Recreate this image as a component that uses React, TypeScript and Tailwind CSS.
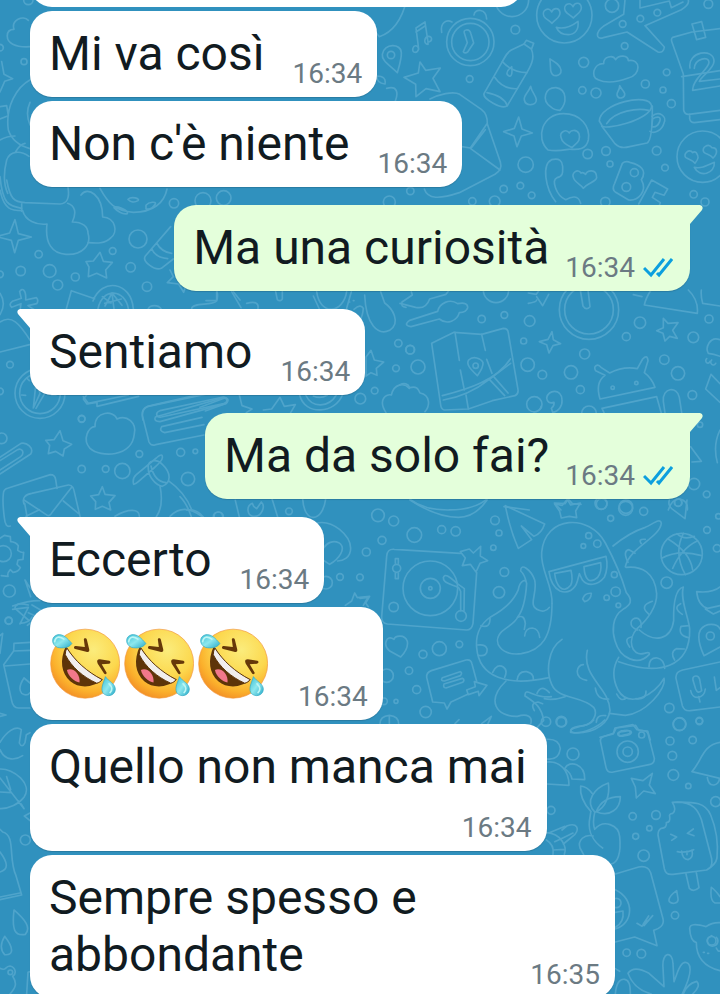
import clsx from "clsx";

interface Message {
  id: number;
  text: string;
  time: string;
  own?: boolean;
  tail?: boolean;
  stacked?: boolean;
  laughs?: number;
}

const messages: Message[] = [
  { id: 1, text: "Mi va così", time: "16:34" },
  { id: 2, text: "Non c'è niente", time: "16:34" },
  { id: 3, text: "Ma una curiosità", time: "16:34", own: true, tail: true },
  { id: 4, text: "Sentiamo", time: "16:34", tail: true },
  { id: 5, text: "Ma da solo fai?", time: "16:34", own: true, tail: true },
  { id: 6, text: "Eccerto", time: "16:34", tail: true },
  { id: 7, text: "", time: "16:34", laughs: 3 },
  { id: 8, text: "Quello non manca mai", time: "16:34", stacked: true },
  { id: 9, text: "Sempre spesso e abbondante", time: "16:35" },
];

interface Patch {
  x: number;
  y: number;
  dots: number[][];
  paths: string[];
}

const HEART = "c-8-18-32-5-23 13 5 9 16 12 24 21 10-13 25-16 24-32-2-16-20-16-25-2z";

// Doodles are drawn at three times their size on the wallpaper
const patches: Patch[] = [
  {
    x: 360,
    y: 0,
    dots: [
      [466, 89, 13], [329, 237, 10], [671, 187, 15], [667, 271, 11], [708, 279, 15], [794, 138, 10], [841, 56, 10],
      [892, 38, 10], [788, 72, 10], [756, 17, 20], [1045, 12, 13], [856, 252, 12], [920, 217, 10], [909, 270, 9],
      [934, 311, 12], [683, 462, 14], [738, 453, 13], [750, 492, 9], [890, 452, 13], [915, 503, 10], [497, 494, 23],
      [431, 567, 11], [481, 557, 10], [515, 586, 10], [404, 604, 16], [337, 604, 11], [151, 573, 11], [736, 606, 14],
      [1001, 583, 11], [1035, 606, 12], [93, 165, 11], [823, 518, 12], [799, 561, 13], [613, 46, 83], [331, 126, 71],
      [331, 126, 56], [1028, 470, 77], [456, 0, 50], [88, 606, 18],
    ],
    paths: [
      "M575 36" + HEART,
      "M639 20" + HEART,
      "M589 82c22 6 44-2 65-18 3 24-8 39-29 40-18 0-31-10-36-22z",
      "M318 90q12-2 15 12l8 27-18 27q-8 6-13-1l12-27-9-29q-2-8 5-9z",
      "M245 97c-5-30 15-40 31-31M342 45c2-21 37-19 38 12",
      "M176 147l-8-63 27-18 9 60M168 96l27-18M176 147c-5 15-22 12-17-3 3-10 15-9 17 3zM204 126c14 0 14-18 1-17-12 2-16 23-1 24z",
      "M112 218c-22-22-48-36-45-55 5-34 56-34 57-5 1 18-7 42-12 60z",
      "M180 186l17 25 44-7-22 31 21 40-42-9-30 24-1-37-35-21 43-13z",
      "M492 132l-38 18c-14 8-19 20-27 35l-55 96c-5 15 55 50 70 36l59-100c18-30 22-49 13-70l-22-15z",
      "M492 132l7-11 22 9-6 16M427 185q30 33 74 33M404 232q25 37 68 34M381 278q50 10 61 39",
      "M455 200c4 30-5 33-13 24-6-11 8-18 13-24z",
      "M570 177l2 34c4 24 33 19 31-1-2-15-18-24-33-33z",
      "M512 259c-7 20-22 27-19 41 4 20 36 18 36-1-1-13-14-22-17-40z",
      "M779 257c0 15-9 18-8 28 4 15 25 9 23-4-2-9-10-13-15-24z",
      "M573 321c-30-20-18-59 15-58 33 5 34 46 12 68q-18-1-27-10z",
      "M564 450c-39-36-17-109 46-109 52 0 82 38 75 79-9 38-47 26-60 28s-33 7-61 2z",
      "M628 399c-10-14-30-3-25 13 3 16 17 22 33 31 13-14 28-20 21-42-8-15-26-10-29-2z",
      "M476 351l10 36 31 12-33 9-13 32-9-32-31-13 32-10z",
      "M714 239c-24-7-13-50 17-48-1-21 28-28 36-12 9-15 37-14 38 3 38-8 39 44 0 52-35 13-66 17-91 5z",
      "M718 363c0-52 151-88 157-45 0 41-151 78-150 57z",
      "M725 378l40 53q15 17 44 9l52-11q17-7 16-111M740 371c25-40 94-47 126-40",
      "M876 349c21-18 46 0 36 20-6 23-30 33-42 25M878 356c15-8 27-6 21 9-6 15-15 17-24 15z",
      "M795 0l-4 43-61 36c-25 18-22 42 0 34l71-17 93 60q17 4 19-15l-58-64 109-48q25-15 21-29M840 0v24l88-21 6 20 35-17",
      "M1080 86l-84 10-58 16q-6 4-2 15l34 95 1 108q2 13 15 13l94-12M965 230l115-18M996 72l29-7 12 47-27 7zM989 342v14q2 12 14 12l77-9",
      "M990 204c-9-50 72-62 72-20 0 22-35 42-44 60l62-7M1003 205c2-30 44-38 44-18 0 20-51 51-49 84l82-13",
      "M663 519c-10-15-28 0-23 13 4 16 23 21 30 33 12-16 39-20 40-32 0-29-31-22-33-10q-8-8-14-4z",
      "M575 479c24-6 32 5 33 20 0 16 3 30-17 34-17 7-3 53 26 66 18-10 38-15 45 11M575 479c-30 14-20 85 12 126",
      "M787 490q10-9 25-2c26 6 52 22 32 51 20 36-11 64-38 61l-39-23q-13-9-3-27zM836 612l39-72 48 27-11 19-27-9-8 15 24 16-7 20",
      "M998 458c-10-15-31 5-20 15 10 7 18 6 27 17 11-14 12-20 4-32q-6-5-11 0zM1056 443c-11-15-34 0-24 14 9 7 18 6 27 17 15-14 14-31-3-31zM1003 502c20 5 38-5 60-15 3 35-45 47-60 15z",
      "M210 297c25-13 70-25 89-14l65 45q19 14 18 44l39 114q7 23-16 37l-107 55c-60 20-95 20-105-11M382 370l-51 74-30-5M420 510l-88-64 44-57",
      "M0 40l58 70q60-20 82-110M50 228q30 0 25 24-25-3-25-24zM80 265c33-10 35 15 26 38",
    ],
  },
  {
    x: 0,
    y: 180,
    dots: [
      [522, 70, 14], [609, 62, 24], [671, 54, 22], [414, 177, 27], [392, 262, 14], [338, 213, 10], [116, 223, 11],
      [62, 273, 14], [149, 273, 19], [173, 315, 15], [226, 291, 12], [0, 283, 10], [441, 320, 14], [30, 554, 10],
      [0, 634, 10], [120, 640, 75], [120, 640, 61], [245, 716, 10],
    ],
    paths: [
      "M45 119l10 42 39 10-39 10-11 37-10-37-44-11 39-11z",
      "M0 30c12 60 35 62 68 62 8 29 40 44 73 40-7 58 16 89 57 91 48 3 77-28 66-63 0-20-16-34-47-34 14-30 7-49-14-56",
      "M20 0c10 56 22 66 55 68l105 4q32-2 24-50M65 70v24M243 45c20-28 65 0 65 66 40 3 46 46 25 62-18 19-43 17-68 15",
      "M300 25c24 44 45 68 100 72 60 0 93-29 101-70M342 83c4-8 44 6 40 18-14 4-32-9-40-18zM384 58c10-10 38-3 30 4-11 7-23 4-30-4zM438 76c9-11 32-12 28-4-10 14-20 18-28 14z",
      "M300 217l10 27 27 3-20 23 3 24-30-14-25 10 2-29-9-16 22-2z",
      "M512 140l-76 88c-11 16 28 45 48 37l36-28M455 206q10 26 48 30M470 189q14 27 45 31M510 270l10 20-18 18 34 4 15 25 8-24",
      "M199 386l15-54 70 24M279 363c25-70 115-60 121 24M294 386c14-66 82-58 91 0M315 378l21-39 6 48M336 339l30 37M307 350l26 19M314 370l50-13",
      "M0 340q20 30 0 64M59 335c8-14 20-5 18 25l32-7q8 8 1 18l-26 6 20 13M61 385l2-14-28 11q-10-9 2-18l27-9-5-20",
      "M0 426c34-23 58 3 91 56M0 516l89-22M575 386c0-20 62-8 74-23q6-11 2-28M445 386c5-12 30-12 38 0M700 335l20 25",
      "M120 640l-12-32-8 76zM108 608l28 29-28 48M65 645l12 1M155 645l13 0M80 594l8 8",
      "M260 645l-10 12 11 15 30-5v12l125-30M429 720c-6-25 2-40 26-44l264-60M480 692l190-41c18 2 13 16 1 20l-187 40c-18 2-18-14-4-19z",
    ],
  },
  {
    x: 400,
    y: 290,
    dots: [
      [245, 87, 11], [313, 75, 10], [389, 93, 16], [31, 179, 13], [54, 231, 21], [371, 153, 9], [554, 192, 15],
      [513, 247, 20], [383, 224, 20], [427, 254, 13], [541, 299, 12], [720, 98, 17], [679, 140, 12], [880, 142, 16],
      [927, 87, 12], [793, 209, 14], [834, 250, 20], [877, 315, 13], [567, 59, 89], [567, 59, 73], [227, 227, 8],
      [638, 293, 5], [709, 279, 5], [567, 370, 22], [882, 582, 17], [920, 613, 10], [605, 642, 16], [678, 650, 20],
      [835, 638, 11], [900, 404, 8], [288, 0, 38], [403, 343, 23],
    ],
    paths: [
      "M95 160l67-33 83 6 65-18q14 0 15 14l29 170q2 12-9 18l-68 15-72 25-72 3q-10-3-11-15zM127 317c80-20 162-46 204-110M130 330c60-10 110-40 138-62M281 260l43 49",
      "M268 268l64-48M268 268l46 49",
      "M165 127l13 84M181 240l12 60M198 315l7 42M245 133l11 48M260 208l16 42",
      "M232 257c-23-22-34-35-26-47 13-13 37-6 43 8 1 13-8 27-17 39z",
      "M456 125l4 24 22 12-23 6-12 22-7-25-22-9 26-7z",
      "M541 0l8 48q10 15 21 2l-6-50M790 85l14 15 30-2-16 23 14 24-23-6-14 14-6-23-19-8 20-9z",
      "M600 327q-15-50 15-71l-28-14c-9-13 6-23 16-10l26 17q41-21 83-13l16-29q14-15 16 5l-11 36q22 16 32 44zM606 355l164-35 14 50M606 355l6 13M790 334c-4-42 42-47 48-12l7 46M790 334l5 35",
      "M733 45l159 25q4-40-27-70M733 45q4-20 20-45M700 14l26 6M908 40l52 8M908 40q-6-20-4-40",
      "M0 40l47 12c24 5 36-8 42-25l49-14 10-13M29 91l84-27c5-24 36-40 60-23q31-6 30 12-4 14-25 15c-6 24-37 38-60 19l-85 23q-25-4-4-19z",
      "M440 324c4-26 44-29 46 5 2 18-10 36-28 38l-4-12q10-8 8-18-20 6-22-13zM402 366q18-2 22-18M385 9l24 4 9-13M385 40q25-4 25-10M410 20l18 27 18-34",
      "M0 284c12-6 25-3 29 9 20-5 26 2 31 16 32 6 30 40 15 56M960 149c-31-12-45 25-35 41q16 2 35 9M920 206c-8 8 4 21 10 8M935 210c-8 8 4 23 12 10M933 253l-16 44 43 40M933 253l27 28",
      "M30 628c60 45 180 40 230 0M312 650l76 10M505 627l-10 14-32-2 20 21M505 627l12 14 26 2M805 660q10-34 35-33 25 6 22 33M960 420q-22 44-8 98M872 470l32 44-28 2",
    ],
  },
  {
    x: 0,
    y: 390,
    dots: [
      [245, 87, 10], [5, 145, 16], [418, 192, 10], [542, 187, 12], [586, 184, 7], [564, 267, 20], [367, 243, 23],
      [317, 237, 10], [245, 237, 11], [10, 491, 24], [28, 603, 18], [26, 692, 11], [654, 380, 14],
    ],
    paths: [
      "M180 122l9 30 26 11-22 14-4 21-22-14-22 7 4-25-12-15 25-2z",
      "M307 290l8 23 30 4-18 20 5 23-25-11-21 9 1-23-15-17 24-4z",
      "M285 110c-2-48 58-50 66-23 31-14 59 13 52 44-6 72-102 72-133 44-25-27-3-67 15-65z",
      "M612 135l-145 29q-14 5-20-8l-20-80q-2-19 14-26l184-39M466 81l205-58q21 2 8 17L480 95q-20-1-14-14zM485 110l121-28M612 104l-118 24q-18-5-9-18",
      "M401 283q-5-18 8-29l60-50q20-18 18 0-1 9-25 30l-47 41q-9 8-14 8zM445 235c-4-25 25-30 42-12 29 27 25 57 0 66-24-4-43-34-42-54zM453 228q10 46 45 50M480 288q12 60-11 92M505 272q50 35 71 89",
      "M31 408q-15 6-18-25-6-47-3-71 0-15 15-18l126-40q14 0 16 15l4 26M72 342c-7-19 5-29 23-32l110-25c13-1 16 10 19 25l16 69M72 330l70 46q8 4 15-10l58-74M78 379l40-20M190 333l45 37M74 340l7 39",
      "M0 445l13-9 18 4 1 15q15 1 23 12l-2 14q12 8 18 6l-2 21-15 2-3 13 10 10q-6 13-22 14l-8-8q-10 10-7 20l-20-2M0 240l62-40q10-8 5-18-6-7-14-3L0 212M0 202l63-42c17-4 40 14 29 32L0 252",
      "M345 379c40-24 74-23 73 0M510 379q40-42 95 0M250 20l15 20 120-25M75 570l17 50M38 648q50-17 82-16M75 570q16 30 38 40M38 658l47-6-25 50M60 700q30-2 36-19M96 645l35 20M82 706q31-24 45-18",
    ],
  },
  {
    x: 360,
    y: 500,
    dots: [
      [54, 46, 19], [101, 63, 15], [163, 105, 22], [245, 89, 12], [287, 94, 14], [66, 121, 12], [19, 156, 12],
      [0, 232, 10], [405, 61, 13], [417, 99, 9], [400, 143, 8], [723, 10, 18], [797, 25, 21], [851, 34, 12],
      [752, 55, 9], [433, 216, 13], [417, 277, 17], [920, 248, 17], [1041, 90, 10], [1071, 145, 11], [1075, 49, 8],
      [954, 8, 11], [211, 265, 82], [211, 265, 30], [211, 265, 5], [101, 321, 14], [303, 348, 16], [110, 205, 12],
      [686, 107, 9], [712, 131, 11], [670, 138, 7], [763, 224, 9], [767, 275, 14], [740, 293, 8], [775, 316, 7],
      [965, 162, 62], [1051, 408, 12], [238, 446, 21], [298, 433, 10], [189, 463, 12], [147, 512, 11],
      [80, 527, 20], [170, 569, 12], [108, 604, 6], [197, 636, 17], [72, 604, 10], [604, 665, 16], [928, 624, 14],
      [958, 673, 19], [1018, 664, 10],
    ],
    paths: [
      "M150 0q80 52 145 52 50 0 86-52M436 17l118 55q-9 28-32 37l-38-31 31 41-40 26q-25-55-39-128z",
      "M584 12l23 4 15-18 10 17 29-6-14 24 3 20-22-4-24 5-5-20z",
      "M301 160l-198-12q-22-2-23 21l-15 181q-1 20 17 22l238 18q15 0 19-20l11-152",
      "M328 147l12 12 22-20-1 29 22 14-23 8-12 26-17-23-24 4 9-23-15-19z",
      "M106 176h9v14M106 176v14M106 219v17h9v-17M250 233c5-13 15-6 42 18l21 15-1 66M250 233c-1 17 26 20 46 30l6 11v58",
      "M576 310c3-52-36-103-31-153 10-112 144-116 191-28 28 52 51 108 63 149 22 25 12 37-10 50-35 22-32 69-24 94 15 54 69 78 103 41q2-8-15-3c-40 11-52-43-21-75 30-25 60-66 58-104-5-64-46-84-92-79",
      "M576 310c0 101-30 141-92 151-60 7-90-34-59-66 20-17 42-27 48-44M500 251c-2-18-21-8-25 18-17 42-54 66-82 81-29 20-47 46-43 93 7 90 93 117 216 90M568 322c-9 14-24 12-31 9-37-14-3-48-13-91-11-31-43-54-42-27 14 13 14 24 18 38-3 43-10 80-27 100",
      "M606 418c-44 29-48 98-31 135 20 47 90 33 126 69 15 22-5 50-30 55-29 6-53 14-28 22 70 2 104-36 107-68-2-69-86-100-68-180M574 590c-52 8-80-34-79-2 30 20 49 31 56 73l-20 22M438 543c-61 59-29 108 34 106 30-9 47 1 40 23M615 590q-35 12-62 6",
      "M759 138q50-41 97-56c23-10 45-30 48-12-5 43-96 73-108 130M776 472q-28 45-2 98c33 57 111 15 138-35 8 31-54 105-116 111l-48-6M776 485c120 43 216 18 213-98-2-32-30-90-19-126-26 7-30 58-29 101-8 58-58 68-103 28",
      "M567 215l171-46q8 33-5 63c-20 25-50 28-66 8l-9-19-6 23c-7 25-29 38-52 29q-27-13-33-58zM584 220l49-9q7 31-1 45c-23 28-44 2-48-36zM672 200l50-12q4 27-9 44c-24 21-39 8-41-32zM668 297q6-19 26-17-1 21-20 25z",
      "M363 377q28 10 27-23M355 466q29 5 26-20-5-14-28-11M398 517q14-28 32-16 14 10 4 31M471 541q4-29 29-26 22 5 20 25M473 352q20-10 23 19l-3 17M494 408q2-24 23-24 20 3 22 28",
      "M844 131q-11-15 12-13M804 187q-17-35 3-38l18 11M866 342q-30-24 11-38M833 390c-30-10-23-39 0-35q14 8 10 27M809 441q-20-27 7-30M967 343q-30-20-5-32M985 413q-32-8-22-34l24-2M944 480q-15-23 5-34l24 1M867 501q0-29 25-27 20 4 22 31M680 541c-42-8-30-48-10-47M746 597q-35 4-40-33M709 667q1-24 28-20M770 582q12 25 29 12M828 596q32 4 30-23M531 580q13-29 37-2M523 632q-14-23 11-26l14 5",
      "M923 116q68 41 75 94M938 205q26-60 75-83M951 101q20 20 52 8M970 100q-30 60 6 124M905 175q50-28 120-8M1010 275q48 5 70-14M1010 275q4 42 33 50l37-8M1036 327l24 15 20-9",
      "M1032 467q-24-52-11-77c17-24 52-20 59-3M1080 441l-48 26M1080 486l-112 24q-22 5-20 25l19 82q6 17 24 15l89-11M999 541q-2-12 8-13 9-1 12 10l6 34q-12 11-18-5zM992 572c5 30 41 25 44-5M1016 590l4 16M1063 531l6 40 11-8",
      "M928 0q-6 18 14 31l33 25 6-56M102 418c-23-16-34 17-14 34l34 19q24-25 20-47c-9-24-38-15-40-6z",
      "M218 606l-18-74q-1-15 14-20l104-32q15-3 18 12l14 52M218 606l35 3 8 18 12-21 52-24M247 533l53-18q9 3 1 12l-48 16q-13 0-6-10zM252 552l55-17q9 4 1 12l-50 17q-10-1-6-12zM320 570l26-10-3-15 38 11-24 31-2-13-30 10z",
      "M0 295l24-3-14 24M60 671q0-22 28-25 28 3 28 25M88 646v25M285 671l12-12M365 671l29-22-10 22M720 712l40-10 9-18 58-8 10 16 26 1 8 27M776 702q2-10 15-10 17-4 20 4 0 7-20 9-16 5-15-3z",
    ],
  },
  {
    x: 540,
    y: 720,
    dots: [
      [18, 5, 14], [64, 6, 14], [419, 12, 19], [478, 2, 10], [390, 63, 12], [458, 60, 11], [397, 107, 13],
      [400, 165, 16], [445, 198, 8], [305, 45, 9], [263, 95, 32], [263, 95, 14], [99, 102, 18], [527, 245, 15],
      [33, 271, 12], [278, 289, 11], [348, 285, 13], [328, 325, 8], [287, 349, 9], [311, 407, 17], [405, 586, 11],
      [260, 698, 11], [304, 701, 13], [515, 662, 13], [229, 549, 14],
    ],
    paths: [
      "M182 67q-4-13 11-18l27-9 5-16 54-10 12 15 19 3q14 0 16 17l17 66q1 16-16 19l-107 22q-18 4-22-14zM233 42q0-8 20-8 22-5 21 4-1 7-20 9-20 5-21-5zM92 37q-3-14 23-18 35-3 46-19M92 37c36 7 85-18 102-37",
      "M274 175l35 7 28-22-9 35 18 26-35-8-22 21-3-33z",
      "M19 58q38-3 42 28-5 36-41 31M21 126c38-4 66 25 66 70l-66-4M74 146c14-29 62-13 60 33l-38-2q-4-19-22-31z",
      "M153 275c-23-25-34-51-31-77q20 2 34 22M165 277c-33-33-1-73 40-88 5 35-6 75-40 88zM169 275c10-25 32-45 72-45 0 35-30 63-72 45M152 278l-4 26c-3 30 11 60 40 80M164 278q-7 30 0 50M164 328c27-32 72-13 75 22 5 50-6 79-26 82M159 348c-25-7-47 13-39 36l11 20",
      "M19 338c45 2 63 43 54 65M19 360q25 15 20 43M26 339l49-20M44 365l26-12 29-14M39 390l35-2M66 330l16-13c30-10 36 10 23 26l-35 29",
      "M456 155c30-34 32-80 84-88M456 155l84 20M502 173c5 35 36 22 36 4",
      "M397 247c70-7 81 36 87 51l31 118q4 27-15 34l-101 13c-19 2-23-6-26-17l-19-101q0-15 10-20 17 0 15-17 13-1 10-18-3-8 9-10 13-10-1-33zM397 247c70-3 100 2 115 38 23 55 22 97 19 129q-3 19-31 36M438 462l10 43q13 13 29-2l-8-45",
      "M392 343l18 8-15 10M460 327l-18 13 20 7M412 395q25 5 49-6M425 393q2 25 19 26 17-5 12-29M441 394v10",
      "M410 512q-28 20-22 33c10 9 28 5 26-9zM514 502q-5 40 11 47h15M540 530q-14-20-26-28",
      "M226 462l70-21q28-5 36 17l37 138c5 20-12 31-28 35l10 46-67-26-58 15M226 509c60 28 54 103 0 118M226 577l23-4q4 35-23 49M291 610l15 9 14-20M312 617l26-30M326 588l-16 24",
      "M540 608q-24-1-42 12-48-14-49 5 2 38 20 43 0 66 71 84M515 647c-24 10-11 33 5 31 15-2 17-19 9-26M490 697h3M503 700h3M529 684q5 12 11 9",
      "M226 822q4-47 28-44 18 2 17 44M334 822q-53-14-70-62 17-25 63 0l45 40-3-57c-4-49 29-51 30-12l3 54 11-30q16-39 32-24c14 15-3 60-21 97M430 822q10-30 40-38 14 14-12 38M226 746l13 8",
    ],
  },
  {
    x: 0,
    y: 0,
    dots: [[72, 185, 9], [0, 143, 10], [85, 0, 14]],
    paths: [
      "M90 140c-45 3-70-12-68-33 0-17 12-19 20-19-9-27 27-44 43-27M5 185l7 38 26 13-24 8-14 32M25 390c-10-70 26-130 66-151M90 375q-15-35 0-68M25 390q14 42 65 56M0 320l20-3 5 30-25 10M0 420q20-12 45-12M45 458q15-26 30-28M20 480c10-27 40-30 67-11M20 480q-15 60 3 100M0 530c8 84 27 88 65 95",
    ],
  },
  {
    x: 0,
    y: 600,
    dots: [[76, 720, 15], [31, 1117, 7], [26, 62, 10]],
    paths: [
      "M90 127l-48 3-1 23-30 41 24 108q4 22 20 22h35M41 153l49-2M14 198l76-6M72 234q-20 30-7 46 15 10 25-2M72 234l18 15M0 107l8-7-8 60M0 340l18 5-18 4",
      "M0 449c16 38 50 30 68 18M0 427c18-30 47-53 64-38l-6 40q8 17 17-1l4-24 11-6M0 507c40-2 100 45 72 85-15 20-45 35-72 34M0 534l72 92M72 626q-5-12-18-24M20 530l12 39M0 576l34 2M90 639l-17 9 17 14",
      "M0 688l8 8c40 10 16 80 40 131l17 58-65 14M0 891l60-12M0 756q38 50 0 60M42 930c34 30 52 53 34 73-31 6-41-12-34-73zM14 1009c35 45 19 57 0 55q-20-22 0-55M0 1105c20 10 13-6 30-7 18 4 20 24 8 31 15 22 8 35-8 53M80 1182l4-65 6-2",
      "M45 25q0-20 40-10M45 25l40 35M85 38q20 11 38 14",
    ],
  },
  {
    x: 200,
    y: 280,
    dots: [[595, 190, 11], [630, 209, 13], [588, 265, 10], [524, 332, 10], [481, 356, 16]],
    paths: [
      "M513 211l10 29 28 6-22 19 2 21-18-8-15 10v-57zM227 35l5 24q9 7 15-2v-22M340 48l18 39M350 35c10 75 80 65 90 0M440 85l14-50M494 45c4 90 40 123 75 106 35-24 8-66-15-82l-12-34M447 66h2M460 62h2",
      "M462 88q20-18 28-3-2 23-10 35M634 35l3 10-31 21q-5 15 12 16",
      "M558 398c-26-40 2-58 16-53 8-34 38-38 54-20M299 345c15 64 109 56 129-2M317 345c20 42 70 37 92 0M340 348q22 10 42-3M190 390l25-3 25-35 13 27 33-5-14 24M118 345l8 32 30 10-17 11M0 382l74-28q13 5 2 17l-60 22M95 35l28 48M140 70q38-10 34 15M18 62h32V35",
    ],
  },
  {
    x: 180,
    y: 490,
    dots: [[327, 64, 10], [480, 261, 10], [438, 278, 19], [116, 80, 14]],
    paths: [
      "M368 27c5 77 60 70 69 0M407 100c51-14 105 38 105 75 0 28-23 38-39 38M430 175c10-17 30-25 46-17 27 17-2 51-27 65M429 210l20 13M524 309l8 14 37-4-12 20 8 11M524 309l-9 24-19 13M166 31l12 50M276 26l17 55M217 40c-20 9-15 34 1 39 28 3 39-31 26-43l-14 20-9-7zM0 20q20 20 34 60M20 60q30-5 50 21",
    ],
  },
];

function Wallpaper() {
  return (
    <svg
      aria-hidden
      viewBox="0 0 720 994"
      preserveAspectRatio="xMidYMin slice"
      className="absolute inset-0 h-full w-full"
      fill="none"
      stroke="#4fa4cb"
      strokeLinecap="round"
      strokeLinejoin="round"
    >
      {patches.map((patch, i) => (
        <g key={i} transform={`translate(${patch.x} ${patch.y}) scale(0.33333)`} strokeWidth="5">
          {patch.dots.map(([cx, cy, r], j) => (
            <circle key={j} cx={cx} cy={cy} r={r} />
          ))}
          {patch.paths.map((d, j) => (
            <path key={j} d={d} />
          ))}
        </g>
      ))}
    </svg>
  );
}

function Laugh() {
  return (
    <svg role="img" aria-label="Rotolarsi dal ridere" viewBox="61 54 211 213" className="h-[71px] w-[70px]">
      <defs>
        <radialGradient id="face" cx="0.62" cy="0.3" r="0.76">
          <stop offset="0" stopColor="#fbec7c" />
          <stop offset="0.5" stopColor="#fcd84e" />
          <stop offset="0.8" stopColor="#fbb02c" />
          <stop offset="1" stopColor="#f18a25" />
        </radialGradient>
        <linearGradient id="tear" x1="0" y1="0" x2="1" y2="1">
          <stop offset="0" stopColor="#37bdd5" />
          <stop offset="0.5" stopColor="#8de8ee" />
          <stop offset="1" stopColor="#27a9c9" />
        </linearGradient>
      </defs>
      <circle cx="167" cy="161" r="104" fill="url(#face)" stroke="#f1953a" strokeWidth="2" />
      <path d="M109 108c-20 43-14 82 13 106 27 23 70 20 98-5-45-20-84-55-111-101z" fill="#5d3409" />
      <path d="M112 180c19-9 41 12 38 38-14-3-34-18-38-38z" fill="#f2788a" />
      <path
        d="M112 114c24 38 60 71 106 95-4 6-9 9-16 11-42-19-76-49-95-86q0-12 5-20z"
        fill="#f1eeee"
        stroke="#5d3409"
        strokeWidth="3"
        strokeLinejoin="round"
      />
      <path d="M163 88c0-5 8-5 9 0l7 29c2 8-2 10-9 8l-33-8c-6-2-4-10 2-9l27 3z" fill="#663809" />
      <path d="M231 187c3 4-3 8-7 4l-19-30c-4-8-2-13 6-13l29 4c5 2 4 8-1 9l-22 2z" fill="#663809" />
      <path d="M127 100c-10 15-28 15-43 12-20-8-20-33-1-38 18-4 31 12 44 26z" fill="url(#tear)" stroke="#35aac2" strokeWidth="2" />
      <path d="M228 200c-5 18-15 33-8 48 10 16 38 11 38-11-1-16-20-22-30-37z" fill="url(#tear)" stroke="#35aac2" strokeWidth="2" />
      <path d="M75 95c4-20 18-15 28-8M239 222c10 9 11 19 3 26" fill="none" stroke="#bdf6f4" strokeWidth="5" strokeLinecap="round" />
    </svg>
  );
}

function ReadTicks() {
  return (
    <svg role="img" aria-label="Letto" viewBox="0 0 30 20" className="h-5 w-[30px]" fill="none" stroke="#0c9fde" strokeWidth="3">
      <path d="M1 10l7 7L21 1M14 15l2 2L29 1" />
    </svg>
  );
}

function Tail({ own }: { own?: boolean }) {
  return (
    <svg
      aria-hidden
      viewBox="0 0 14 21"
      className={clsx("absolute top-0 h-[21px] w-[14px]", own ? "-right-[13px] -scale-x-100 text-[#e4ffdb]" : "-left-[13px] text-white")}
      fill="currentColor"
    >
      <path d="M14 0H3Q-1 1 1 5L13 19V21H14Z" />
    </svg>
  );
}

function Bubble({ message }: { message: Message }) {
  const { text, time, own, tail, stacked, laughs } = message;
  return (
    <li
      className={clsx(
        "relative flex max-w-[585px] rounded-[22px] pl-[19px] pb-[7px] shadow-[0_1px_1px_rgba(0,0,0,0.15)]",
        own ? "self-end bg-[#e4ffdb] pr-[17px]" : "self-start bg-white pr-[15px]",
        tail && (own ? "rounded-tr-none" : "rounded-tl-none"),
        tail || own ? "mt-[18px]" : "mt-1",
        stacked ? "flex-col" : own ? "gap-x-4" : "gap-x-[23px]",
        laughs ? "pt-[21px]" : "pt-[14px]",
      )}
    >
      {tail && <Tail own={own} />}
      {laughs ? (
        <p className="flex gap-1 pb-[14px] pl-px pr-[7px]">
          {Array.from({ length: laughs }).map((_, i) => (
            <Laugh key={i} />
          ))}
        </p>
      ) : (
        <p className={clsx("text-5xl leading-[57px] text-[#111b21]", !stacked && "pb-2", !own && "pr-[5px]")}>{text}</p>
      )}
      <div className={clsx("flex items-center gap-2 self-end", stacked && "mt-[17px]")}>
        <time className="text-[28px] leading-8 text-[#6b7a83]">{time}</time>
        {own && <ReadTicks />}
      </div>
    </li>
  );
}

export default function App() {
  return (
    <main className="relative h-screen overflow-hidden bg-[#3091be] font-[Roboto,'Liberation_Sans',sans-serif]">
      <Wallpaper />
      <ul className="relative -mt-20 flex flex-col px-[30px]">
        {/* end of the message scrolled off the top */}
        <li className="h-[87px] w-[493px] max-w-full rounded-[22px] bg-white" />
        {messages.map((message) => (
          <Bubble key={message.id} message={message} />
        ))}
      </ul>
    </main>
  );
}
